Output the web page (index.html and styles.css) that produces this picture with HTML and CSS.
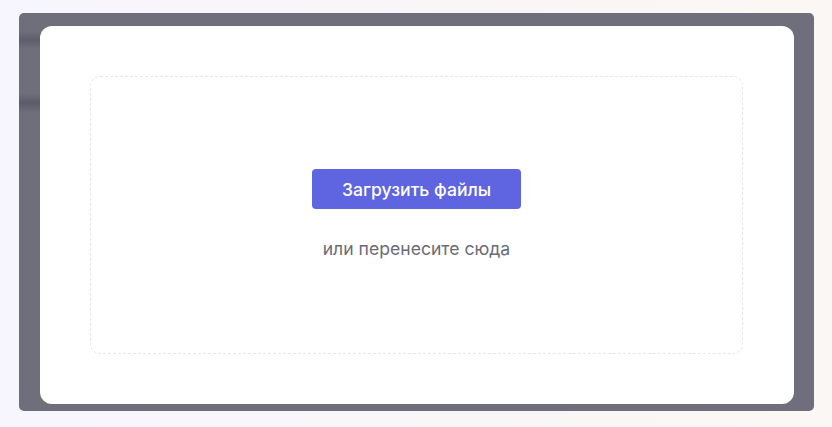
FILE: index.html
```html
<!DOCTYPE html>
<html lang="ru">
<head>
  <meta charset="UTF-8" />
  <meta name="viewport" content="width=device-width, initial-scale=1.0"/>
  <title>Загрузка файлов</title>
  <link rel="stylesheet" href="styles.css">
</head>
<body>

  <div class="overlay">
    <div class="modal">
      <div class="dropzone">
        <button class="upload-btn">Загрузить файлы</button>
        <p class="hint">или перенесите сюда</p>
      </div>
    </div>
  </div>

</body>
</html>
```

FILE: styles.css
```css
* {
  box-sizing: border-box;
}

body {
  margin: 0;
  padding: 13px 18px 16px 19px;
  height: 427px;
  background: linear-gradient(to right, #f7f5fd, #fbf7f4);
  font-family: Inter, 'Noto Sans', sans-serif;
}

/* dimmed backdrop behind the modal */
.overlay {
  height: 398px;
  padding: 13px 20px 7px 21px;
  border-radius: 5px;
  background-color: #6f6e7b;
  background-image: linear-gradient(to bottom,
    #6f6e7b 18px, #5d5d6b 27px, #6f6e7b 36px,
    #6f6e7b 80px, #5b5b69 90px, #6f6e7b 100px);
  background-size: 40px 100%;
  background-repeat: no-repeat;
}

.modal {
  height: 378px;
  padding: 50px 51px 50px 50px;
  background: #ffffff;
  border-radius: 12px;
}

.dropzone {
  height: 100%;
  border: 1px dashed #e6e6ea;
  border-radius: 10px;
  display: flex;
  flex-direction: column;
  align-items: center;
  justify-content: center;
}

.upload-btn {
  width: 209px;
  height: 40px;
  border: none;
  border-radius: 4px;
  background-color: #5f64e0;
  color: #ffffff;
  font-family: Inter, 'Noto Sans', sans-serif;
  font-size: 17.6px;
  font-weight: 500;
  cursor: pointer;
}

.hint {
  margin: 28px 0 0;
  font-size: 17.6px;
  line-height: 24px;
  color: #6b6b76;
}
```
